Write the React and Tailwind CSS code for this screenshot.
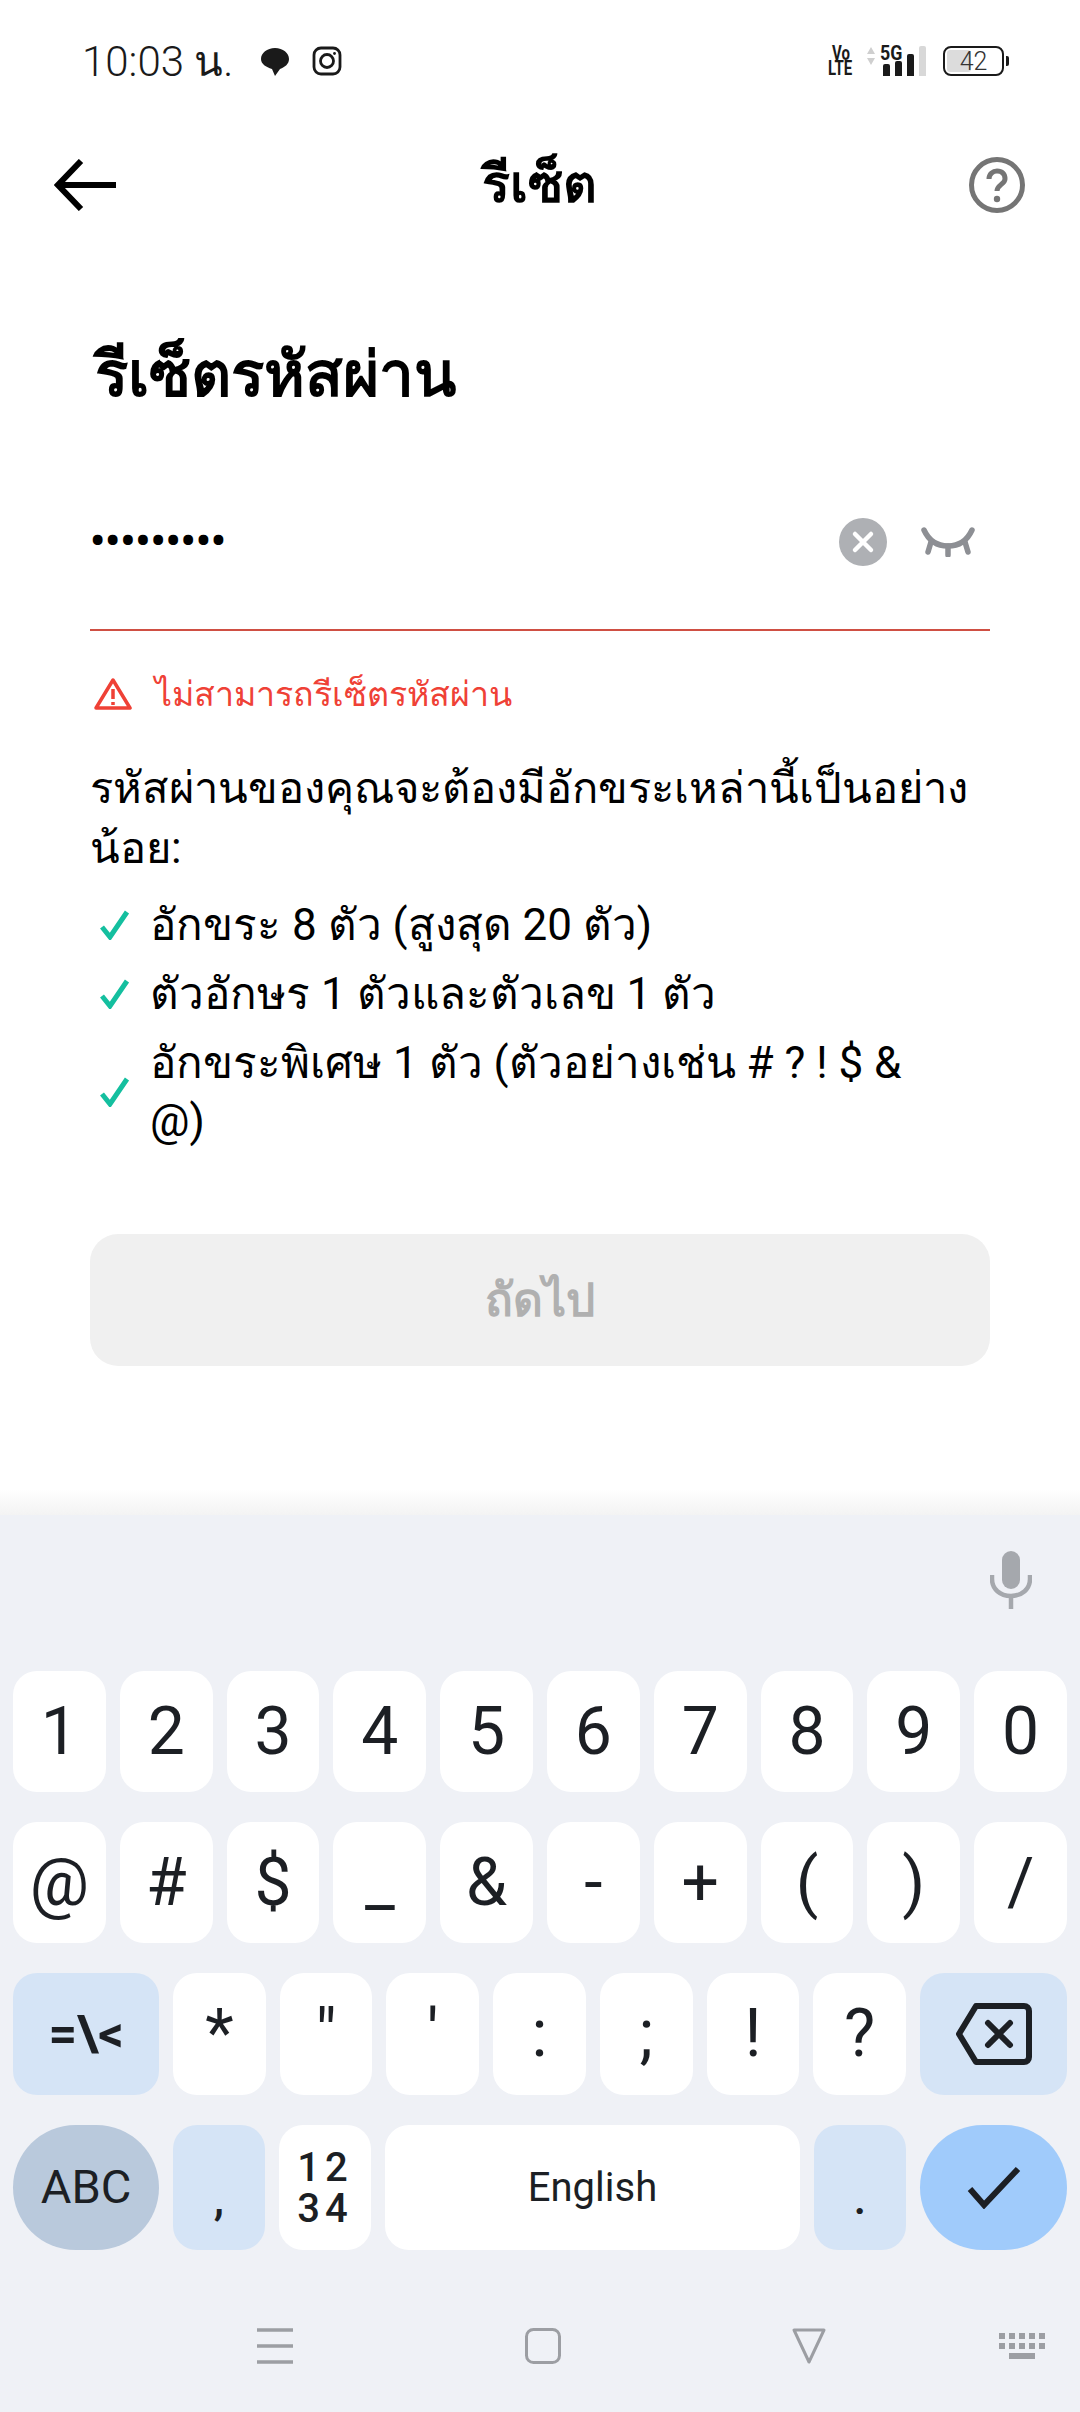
import React from "react";

const FONT = "font-['Roboto','Noto_Sans','Noto_Sans_CJK_SC',sans-serif]";

function Key({ children, className = "", grow = true }) {
  return (
    <div className={`${grow ? "flex-1" : ""} ${className} flex h-full items-center justify-center rounded-[24px] text-[#1c1f24]`}>
      {children}
    </div>
  );
}

function Sym({ children, className = "" }) {
  return <span className={`text-[66px] leading-none ${className}`}>{children}</span>;
}

function Check() {
  return (
    <svg width="30" height="30" viewBox="0 0 30 30" className="shrink-0">
      <path d="M2 17 L10 27 L27 2" fill="none" stroke="#14bf9f" strokeWidth="5" />
    </svg>
  );
}

function StatusBar() {
  return (
    <div className="flex h-[122px] items-center pr-[71px] pl-[82px]">
      <span className="text-[42px] font-light text-[#1a1a1a]">10:03 น.</span>
      <svg width="30" height="30" viewBox="0 0 30 30" className="ml-[27px]">
        <path d="M15 2 C23 2 29 7 29 13 C29 18 25 21 20 23 L15 30 L12 23 C6 21 1 18 1 13 C1 7 7 2 15 2 Z" fill="#1a1a1a" />
      </svg>
      <svg width="30" height="30" viewBox="0 0 30 30" className="ml-[22px]" fill="none" stroke="#1a1a1a" strokeWidth="2.8">
        <rect x="2" y="2" width="26" height="26" rx="7" />
        <circle cx="15" cy="15" r="6.5" />
        <circle cx="22.5" cy="7.5" r="1.4" fill="#1a1a1a" stroke="none" />
      </svg>
      <div className="ml-auto flex items-center">
        <div className="flex w-[21px] flex-col items-center text-[20px] leading-[15px] font-bold text-[#1a1a1a]">
          <span className="scale-x-[0.75]">Vo</span>
          <span className="scale-x-[0.75]">LTE</span>
        </div>
        <svg width="10" height="20" viewBox="0 0 10 20" className="mb-[10px] ml-[15px]">
          <path d="M5 1 L9 8 L1 8 Z M5 19 L9 12 L1 12 Z" fill="#cfcfcf" />
        </svg>
        <div className="relative ml-[4px] h-[30px] w-[50px]">
          <span className="absolute -top-[3px] left-0 origin-left scale-x-[0.85] text-[21px] leading-[20px] font-bold text-[#1a1a1a]">5G</span>
          <div className="absolute bottom-0 left-[3px] flex items-end gap-[5px]">
            <div className="h-[12px] w-[7px] rounded-t-[2px] bg-[#1a1a1a]" />
            <div className="h-[15px] w-[7px] rounded-t-[2px] bg-[#1a1a1a]" />
            <div className="h-[22px] w-[7px] rounded-t-[2px] bg-[#1a1a1a]" />
            <div className="h-[30px] w-[7px] rounded-t-[2px] bg-[#d8d8d8]" />
          </div>
        </div>
        <div className="relative ml-[13px] flex h-[30px] w-[61px] items-center justify-center rounded-[8px] border-[2.5px] border-[#1a1a1a]">
          <div className="absolute top-[2px] bottom-[2px] left-[2px] w-[24px] rounded-[3px] bg-[#dcdcdc]" />
          <span className="relative text-[25px] leading-none font-light text-[#333]">42</span>
        </div>
        <div className="ml-[2px] h-[10px] w-[3px] rounded-r-[2px] bg-[#1a1a1a]" />
      </div>
    </div>
  );
}

function Keyboard() {
  return (
    <div className="relative flex flex-1 flex-col bg-[#eff1f6]">
      <div className="absolute -top-[26px] right-0 left-0 h-[26px] bg-gradient-to-b from-white to-[#f3f3f3]" />
      <div className="flex h-[156px] justify-end pt-[36px] pr-[48px]">
        <svg width="42" height="58" viewBox="0 0 42 58" fill="none">
          <rect x="12" y="0" width="18" height="38" rx="9" fill="#a5a8ad" />
          <path d="M2 24 V28 C2 38 10 45 21 45 C32 45 40 38 40 28 V24" stroke="#a5a8ad" strokeWidth="4.5" />
          <path d="M21 44 V58" stroke="#a5a8ad" strokeWidth="4.5" />
        </svg>
      </div>

      <div className="flex flex-col gap-[30px] px-[13px]">
        <div className="flex h-[121px] gap-[14px]">
          {["1", "2", "3", "4", "5", "6", "7", "8", "9", "0"].map((k) => (
            <Key key={k} className="bg-white"><Sym>{k}</Sym></Key>
          ))}
        </div>
        <div className="flex h-[121px] gap-[14px]">
          {["@", "#", "$", "_", "&", "-", "+", "(", ")", "/"].map((k) => (
            <Key key={k} className="bg-white"><Sym className="text-[64px]">{k}</Sym></Key>
          ))}
        </div>
        <div className="flex h-[122px] gap-[14px]">
          <Key grow={false} className="w-[146px] bg-[#d5e4f6]">
            <span className="text-[50px] font-bold">=\&lt;</span>
          </Key>
          {["*", '"', "'", ":", ";", "!", "?"].map((k) => (
            <Key key={k} className="bg-white"><Sym>{k}</Sym></Key>
          ))}
          <Key grow={false} className="w-[147px] bg-[#d5e4f6]">
            <svg width="76" height="62" viewBox="0 0 76 62" fill="none" stroke="#1c1f24" strokeWidth="6">
              <path d="M20 3 H68 C71 3 73 5 73 8 V54 C73 57 71 59 68 59 H20 L3 31 Z" strokeLinejoin="round" />
              <path d="M32 20 L54 42 M54 20 L32 42" strokeLinecap="round" />
            </svg>
          </Key>
        </div>
        <div className="flex h-[125px] gap-[14px]">
          <div className="flex h-full w-[146px] items-center justify-center rounded-full bg-[#b9c9dc] text-[47px] text-[#1c1f24]">ABC</div>
          <Key grow={false} className="w-[92px] bg-[#d5e4f6]">
            <span className="mt-[22px] text-[46px] font-medium">,</span>
          </Key>
          <Key grow={false} className="w-[92px] bg-white">
            <span className="text-center text-[40px] leading-[41px] font-medium tracking-[5px]">12<br />34</span>
          </Key>
          <Key className="bg-white">
            <span className="text-[40px]">English</span>
          </Key>
          <Key grow={false} className="w-[92px] bg-[#d5e4f6]">
            <span className="mt-[22px] text-[46px] font-medium">.</span>
          </Key>
          <div className="flex h-full w-[147px] items-center justify-center rounded-full bg-[#a0cbfb]">
            <svg width="54" height="42" viewBox="0 0 54 42" fill="none" stroke="#1c1f24" strokeWidth="6">
              <path d="M3 22 L17 38 L51 2" />
            </svg>
          </div>
        </div>
      </div>

      <div className="relative mt-[79px] flex h-[34px] items-center">
        <svg width="36" height="36" viewBox="0 0 36 36" className="ml-[257px]">
          <path d="M0 2 H36 M0 18 H36 M0 34 H36" stroke="#9c9ea3" strokeWidth="3.5" />
        </svg>
        <svg width="36" height="36" viewBox="0 0 36 36" className="ml-[232px]" fill="none">
          <rect x="1.5" y="1.5" width="33" height="33" rx="7" stroke="#9c9ea3" strokeWidth="3" />
        </svg>
        <svg width="36" height="36" viewBox="0 0 36 36" className="ml-[230px]" fill="none">
          <path d="M3 2 H33 L18 34 Z" stroke="#9c9ea3" strokeWidth="3" strokeLinejoin="round" />
        </svg>
        <svg width="46" height="26" viewBox="0 0 46 26" className="ml-[172px]" fill="#9c9ea3">
          {[0, 10, 20, 30, 40].map((x) => (
            <React.Fragment key={x}>
              <rect x={x} y="0" width="6" height="6" />
              <rect x={x} y="10" width="6" height="6" />
            </React.Fragment>
          ))}
          <rect x="10" y="20" width="26" height="6" />
        </svg>
      </div>
    </div>
  );
}

export default function App() {
  return (
    <div className={`flex h-[2412px] w-[1080px] flex-col overflow-hidden bg-white text-black ${FONT}`}>
      <StatusBar />

      {/* HEADER */}
      <div className="flex h-[126px] items-center justify-between pr-[55px] pl-[54px]">
        <svg width="62" height="52" viewBox="0 0 62 52" fill="none" stroke="#000" strokeWidth="6">
          <path d="M62 26 H4 M27 2 L4 26 L27 50" />
        </svg>
        <h1 className="mr-[6px] text-[52px] leading-none font-bold">รีเซ็ต</h1>
        <svg width="56" height="56" viewBox="0 0 56 56" fill="none">
          <circle cx="28" cy="28" r="25.5" stroke="#757575" strokeWidth="5" />
          <path d="M20 22 C20 17 24 14 28 14 C33 14 36 17 36 22 C36 27 28 28 28 34" stroke="#757575" strokeWidth="5" />
          <circle cx="28" cy="42" r="3.2" fill="#757575" />
        </svg>
      </div>

      <div className="flex flex-col px-[90px]">
        <h2 className="mt-[87px] h-[80px] pl-[5px] text-[62px] leading-[80px] font-bold">รีเซ็ตรหัสผ่าน</h2>

        {/* PASSWORD */}
        <div className="mt-[39px] flex h-[177px] items-center border-b-2 border-[#cf4f43]">
          <span className="text-[42px] leading-none font-bold">•••••••••</span>
          <div className="ml-auto flex h-[48px] w-[48px] items-center justify-center rounded-full bg-[#aeb0b4]">
            <svg width="24" height="24" viewBox="0 0 24 24" stroke="#fff" strokeWidth="4.5" strokeLinecap="round">
              <path d="M4 4 L20 20 M20 4 L4 20" />
            </svg>
          </div>
          <svg width="54" height="30" viewBox="0 0 54 30" className="mr-[15px] ml-[34px]" fill="none" stroke="#8d8f94" strokeWidth="5.5" strokeLinecap="round">
            <path d="M3 3 C8 14 17 19 27 19 C37 19 46 14 51 3" />
            <path d="M10 15 L7 25 M27 19 V28 M44 15 L47 25" />
          </svg>
        </div>

        {/* ERROR */}
        <div className="mt-[38px] flex h-[50px] items-center">
          <svg width="38" height="34" viewBox="0 0 38 34" className="ml-[4px]" fill="none" stroke="#ef4136" strokeWidth="3.5" strokeLinejoin="round">
            <path d="M19 3 L36 31 H2 Z" />
            <path d="M19 12 V22 M19 25 V28" strokeWidth="3.5" />
          </svg>
          <span className="ml-[23px] text-[34px] leading-none text-[#ef4136]">ไม่สามารถรีเซ็ตรหัสผ่าน</span>
        </div>

        <p className="mt-[40px] text-[43.5px] leading-[60px]">รหัสผ่านของคุณจะต้องมีอักขระเหล่านี้เป็นอย่างน้อย:</p>

        {/* RULES */}
        <div className="mt-[11px] flex flex-col text-[44px]">
          <div className="flex h-[69px] items-center gap-[20px] pl-[10px]">
            <Check />
            <span>อักขระ 8 ตัว (สูงสุด 20 ตัว)</span>
          </div>
          <div className="flex h-[69px] items-center gap-[20px] pl-[10px]">
            <Check />
            <span>ตัวอักษร 1 ตัวและตัวเลข 1 ตัว</span>
          </div>
          <div className="mt-[6px] flex items-center gap-[20px] pl-[10px]">
            <Check />
            <span className="max-w-[790px] leading-[58px]">อักขระพิเศษ 1 ตัว (ตัวอย่างเช่น # ? ! $ &amp; @)</span>
          </div>
        </div>

        <div className="mt-[84px] flex h-[132px] items-center justify-center rounded-[28px] bg-[#f0f0f0] text-[46px] font-bold text-[#b0b0b0]">
          ถัดไป
        </div>
      </div>

      <div className="min-h-0 flex-1" />
      <div className="flex h-[897px] shrink-0 flex-col">
        <Keyboard />
      </div>
    </div>
  );
}
